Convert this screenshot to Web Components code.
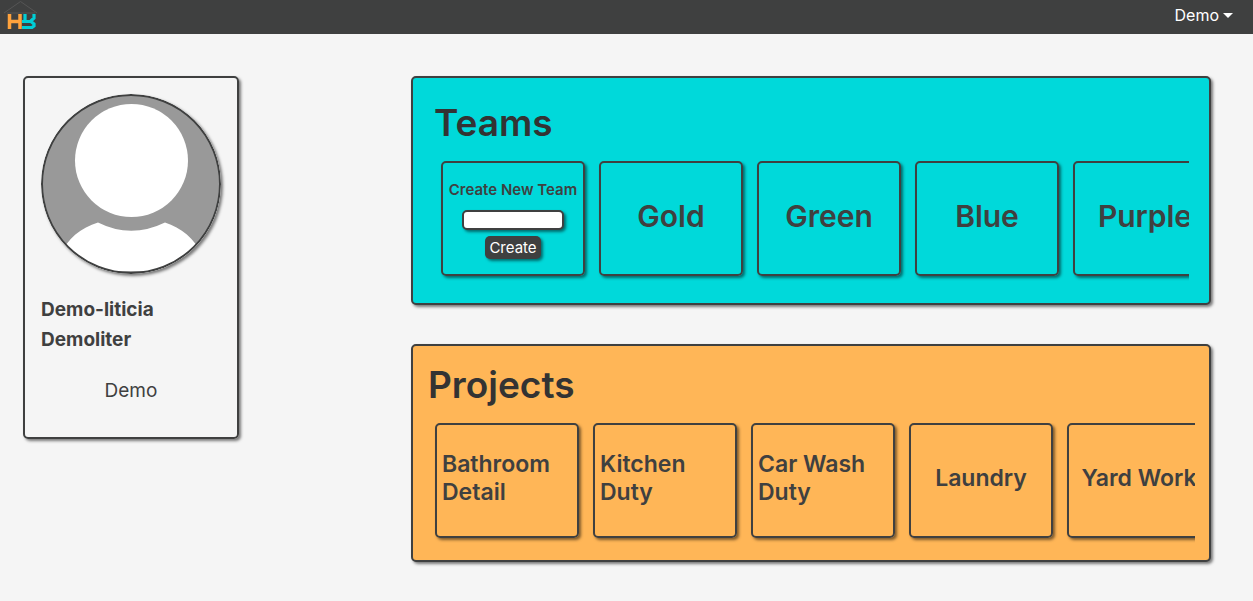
<!DOCTYPE html>
<html lang="en">
<head>
<meta charset="utf-8">
<title>Dashboard</title>
<style>
:root {
  --ink: #3f4040;
  --paper: #f5f5f5;
  --teal: #00d9da;
  --amber: #ffb657;
  --shadow: 2px 2px 3px rgba(0, 0, 0, .5);
}
body {
  margin: 0;
  background: var(--paper);
  color: var(--ink);
  font: 16px/24px Inter, "Liberation Sans", sans-serif;
}
</style>
</head>
<body>
<dash-app></dash-app>
<script>
const define = (name, html) => customElements.define(name, class extends HTMLElement {
  constructor() {
    super();
    const t = document.createElement('template');
    t.innerHTML = html;
    this.attachShadow({ mode: 'open' }).append(t.content.cloneNode(true));
  }
});

define('site-nav', `
<style>
:host { display: flex; justify-content: space-between; align-items: center; height: 34px;
  padding: 0 20px 0 3px; background: var(--ink); color: #fff; }
a, svg { display: block; }
button { font: inherit; line-height: 24px; color: inherit; background: none; border: 0; padding: 0 0 4px;
  display: flex; align-items: center; gap: 4px; }
button::after { content: ""; border: 5px solid transparent; border-top-color: #fff; border-bottom: 0; }
</style>
<a href="#" aria-label="Home">
  <svg width="36" height="34" viewBox="0 0 36 34" fill="none">
    <path d="M1 13 17.500 1.500 34 13M4 13h28" stroke="#555" stroke-width="1"/>
    <path d="M6.500 14v15M17 14v15M7 21.500h11" stroke="#ffa23c" stroke-width="3.500"/>
    <path d="M22 14v8M19 21.500h8.500L31 18V14M28 21.500l3 2.500v2L29 27.500H19" stroke="#00ced6" stroke-width="3.200"/>
  </svg>
</a>
<button type="button" aria-haspopup="true">Demo</button>`);

define('profile-card', `
<style>
:host { display: block; box-sizing: border-box; padding: 16px 16px 31px; border: 2px solid var(--ink);
  border-radius: 5px; box-shadow: var(--shadow); }
svg { display: block; width: 180px; height: 180px; border-radius: 50%; box-shadow: var(--shadow); }
h2 { margin: 21px 0 0; font-size: 19px; line-height: 30px; font-weight: 700; }
p { margin: 21px 0 0; font-size: 19px; line-height: 30px; text-align: center; }
</style>
<svg viewBox="0 0 180 180" role="img" aria-label="Profile picture">
  <defs><clipPath id="c"><circle cx="90" cy="90" r="89"/></clipPath></defs>
  <g clip-path="url(#c)">
    <rect width="180" height="180" fill="#999"/>
    <path d="M14 180C18 152 35 135 57 128.500Q90 145 124 128.500C145 135 162 152 167 180Z" fill="#fff"/>
    <circle cx="90.500" cy="66.500" r="56.500" fill="#fff"/>
    <path d="M60 177h60v3H60z" fill="#999"/>
  </g>
  <circle cx="90" cy="90" r="89" fill="none" stroke="#3f4040" stroke-width="2"/>
</svg>
<h2><slot name="name"></slot></h2>
<p><slot name="handle"></slot></p>`);

define('board-panel', `
<style>
:host { display: block; box-sizing: border-box; border: 2px solid var(--ink); border-radius: 5px;
  padding: var(--panel-pad); background: var(--panel-fill); box-shadow: var(--shadow); }
h1 { margin: 0 0 14px; font-size: 37px; line-height: 48px; font-weight: 600; color: #333; }
.row { display: flex; gap: 14px; overflow: hidden; padding: 0 0 5px 7px; }
</style>
<h1><slot name="title"></slot></h1>
<div class="row"><slot></slot></div>`);

define('board-tile', `
<style>
:host { display: flex; flex: 0 0 144px; height: 115px; box-sizing: border-box; align-items: center;
  justify-content: center; border: 2px solid var(--ink); border-radius: 5px; padding: 0 5px 6px;
  box-shadow: var(--shadow); font-size: 30px; line-height: 38px; font-weight: 600; white-space: nowrap; }
:host([small]) { font-size: 23px; line-height: 28px; white-space: normal; }
a { color: inherit; text-decoration: none; }
</style>
<a href="#"><slot></slot></a>`);

define('team-form', `
<style>
:host { display: block; flex: 0 0 144px; height: 115px; box-sizing: border-box;
  border: 2px solid var(--ink); border-radius: 5px; box-shadow: var(--shadow); }
form { display: flex; flex-direction: column; align-items: center; padding-top: 15px; }
label { font-weight: 600; font-size: 15px; line-height: 24px; white-space: nowrap; }
input { box-sizing: border-box; width: 102px; height: 20px; margin: 8px 0 6px; padding: 0 4px; font: inherit;
  font-size: 12px; background: #fff; border: 2px solid var(--ink); border-radius: 5px; box-shadow: var(--shadow); }
button { height: 23px; padding: 0 4px; border: 0; border-radius: 5px; font: inherit; font-size: 15px; line-height: 23px;
  color: #fff; background: var(--ink); box-shadow: var(--shadow); }
</style>
<form>
  <label for="team">Create New Team</label>
  <input id="team" type="text">
  <button type="button">Create</button>
</form>`);

define('dash-app', `
<style>
:host { display: block; }
main { display: grid; grid-template-columns: 216px minmax(0, 800px); justify-content: space-between;
  align-items: start; gap: 40px; padding: 42px 42px 39px 23px; }
.boards { display: grid; grid-template-columns: minmax(0, 1fr); gap: 39px; }
.teams { --panel-fill: var(--teal); --panel-pad: 21px 20px 22px 21px; }
.projects { --panel-fill: var(--amber); --panel-pad: 15px 14px 17px 15px; }
</style>
<site-nav></site-nav>
<main>
  <profile-card>
    <span slot="name">Demo-liticia Demoliter</span>
    <span slot="handle">Demo</span>
  </profile-card>
  <div class="boards">
    <board-panel class="teams">
      <span slot="title">Teams</span>
      <team-form></team-form>
      <board-tile>Gold</board-tile>
      <board-tile>Green</board-tile>
      <board-tile>Blue</board-tile>
      <board-tile>Purple</board-tile>
    </board-panel>
    <board-panel class="projects">
      <span slot="title">Projects</span>
      <board-tile small>Bathroom Detail</board-tile>
      <board-tile small>Kitchen Duty</board-tile>
      <board-tile small>Car Wash Duty</board-tile>
      <board-tile small>Laundry</board-tile>
      <board-tile small>Yard Work</board-tile>
    </board-panel>
  </div>
</main>`);
</script>
</body>
</html>
